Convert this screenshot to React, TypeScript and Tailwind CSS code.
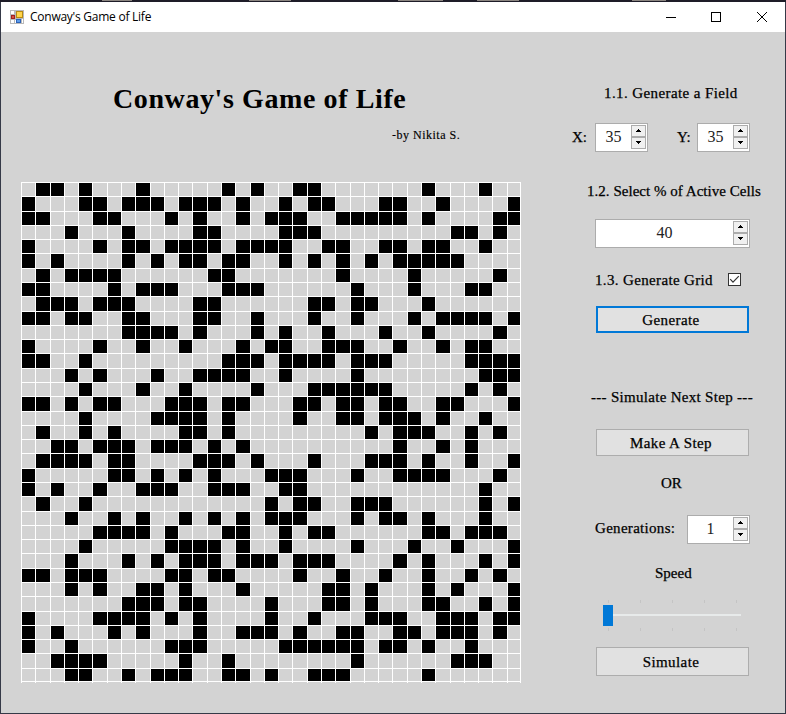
import type { ReactNode } from "react";

const SIZE = 35;
const FIELD = 500;

const ACTIVE: number[][] = [
  [1, 2, 4, 8, 14, 16, 19, 20, 28, 32],
  [0, 4, 5, 7, 8, 9, 11, 12, 13, 15, 18, 20, 21, 25, 26, 29, 34],
  [0, 1, 5, 6, 10, 12, 15, 17, 18, 19, 22, 23, 24, 25, 26, 28, 33, 34],
  [3, 7, 12, 13, 18, 19, 20, 30, 31, 33],
  [0, 5, 7, 8, 10, 11, 12, 13, 15, 16, 17, 18, 21, 22, 25, 26, 28, 29, 32],
  [0, 2, 7, 9, 11, 12, 14, 15, 18, 20, 22, 24, 26, 27, 28, 29, 30],
  [1, 3, 4, 5, 6, 13, 14, 22, 27, 33],
  [0, 1, 6, 8, 9, 10, 14, 15, 16, 23, 27, 31, 32],
  [1, 2, 3, 5, 6, 7, 12, 13, 20, 21, 23, 24, 28],
  [0, 1, 3, 4, 7, 8, 12, 13, 16, 20, 23, 27, 29, 30, 31, 32, 34],
  [7, 8, 9, 10, 12, 16, 18, 21, 25, 28, 33],
  [0, 5, 8, 11, 15, 17, 18, 21, 22, 23, 26, 29, 31, 32],
  [0, 1, 4, 14, 15, 16, 18, 19, 20, 21, 23, 24, 25, 31, 32, 33, 34],
  [3, 5, 9, 12, 13, 14, 15, 18, 23, 32, 33, 34],
  [4, 8, 11, 16, 20, 21, 22, 23, 24, 25, 31, 33],
  [0, 1, 3, 5, 6, 10, 11, 12, 14, 15, 19, 20, 22, 23, 25, 26, 29, 30, 34],
  [4, 9, 10, 11, 12, 14, 19, 22, 23, 25, 26, 27, 29, 32],
  [1, 4, 6, 11, 12, 14, 24, 26, 27, 28, 31, 33],
  [2, 3, 5, 6, 7, 9, 10, 11, 13, 15, 26, 29, 31],
  [1, 2, 3, 4, 6, 7, 12, 13, 14, 16, 20, 24, 25, 26, 28, 31, 34],
  [0, 6, 7, 9, 11, 13, 17, 18, 19, 23, 26, 27, 28, 29, 33],
  [0, 2, 5, 8, 9, 10, 13, 14, 15, 18, 19, 32],
  [1, 4, 17, 19, 20, 23, 24, 25, 32, 34],
  [3, 6, 8, 11, 13, 15, 17, 18, 19, 23, 25, 26, 28, 32],
  [5, 6, 7, 8, 10, 14, 15, 18, 20, 21, 28, 29, 31, 32, 33],
  [4, 10, 11, 12, 13, 15, 18, 23, 27, 30, 34],
  [3, 7, 9, 11, 12, 13, 15, 16, 17, 19, 20, 21, 26, 28, 32, 34],
  [0, 1, 3, 4, 5, 10, 11, 13, 14, 19, 22, 25, 28, 31, 33],
  [3, 5, 8, 9, 11, 15, 21, 22, 24, 28, 30, 34],
  [7, 8, 9, 11, 12, 17, 21, 22, 24, 28, 29, 32, 34],
  [0, 5, 6, 7, 8, 10, 12, 17, 20, 24, 25, 26, 29, 30, 31, 33, 34],
  [0, 2, 6, 8, 12, 15, 16, 17, 19, 22, 23, 26, 27, 29, 30, 31, 33],
  [0, 3, 10, 11, 12, 18, 19, 20, 21, 22, 23, 25, 26, 28, 31],
  [2, 3, 4, 5, 11, 14, 23, 30, 31, 32],
  [3, 4, 7, 9, 10, 11, 14, 15, 17, 20, 21, 22, 28],
];

const edge = (i: number) => Math.min(Math.round((i * FIELD) / SIZE), FIELD - 1);
const TRACKS = Array.from({ length: SIZE }, (_, i) => `${edge(i + 1) - edge(i)}px`).join(" ");

function Field() {
  return (
    <div className="ml-5 w-[500px]">
      <div
        className="grid border-r border-b border-white"
        style={{ gridTemplateColumns: TRACKS, gridTemplateRows: TRACKS }}
      >
        {ACTIVE.map((row, y) =>
          Array.from({ length: SIZE }, (_, x) => (
            <div
              key={`${x}-${y}`}
              className={row.includes(x) ? "border-t border-l border-white bg-black" : "border-t border-l border-white"}
            />
          )),
        )}
      </div>
      <div className="grid h-px border-r border-white" style={{ gridTemplateColumns: TRACKS }}>
        {Array.from({ length: SIZE }, (_, x) => (
          <div key={x} className="border-l border-white" />
        ))}
      </div>
    </div>
  );
}

function Arrow({ down = false }: { down?: boolean }) {
  return (
    <div className="flex h-3 w-[15px] justify-center border border-[#acacac] bg-[#f0f0f0] pt-[3px]">
      <svg width="5" height="3" viewBox="0 0 5 3" shapeRendering="crispEdges" fill="#000">
        {down ? <path d="M0 0h5v1H0zM1 1h3v1H1zM2 2h1v1H2z" /> : <path d="M2 0h1v1H2zM1 1h3v1H1zM0 2h5v1H0z" />}
      </svg>
    </div>
  );
}

function Spinner({ value, width }: { value: string; width: string }) {
  return (
    <div className={`flex h-[29px] border border-[#acacac] bg-white ${width}`}>
      <div className="flex-1 text-center text-[16px] leading-[26px] text-[#222]">{value}</div>
      <div className="flex w-4 flex-col pt-px">
        <Arrow />
        <Arrow down />
      </div>
    </div>
  );
}

function Button({ children, look }: { children: ReactNode; look: string }) {
  return (
    <button
      className={`ml-[31px] flex w-[153px] items-center justify-center bg-[#e1e1e1] pt-0.5 pr-[3px] text-[15px] tracking-[0.4px] [-webkit-text-stroke:0.25px_#000] ${look}`}
    >
      {children}
    </button>
  );
}

function Label({ children, className }: { children: ReactNode; className: string }) {
  return (
    <div className={`h-5 text-[15px] leading-5 whitespace-nowrap [-webkit-text-stroke:0.25px_#000] ${className}`}>
      {children}
    </div>
  );
}

function Ticks() {
  return (
    <div className="ml-[43px] flex h-[3px] w-[129px] justify-between">
      {[0, 1, 2, 3, 4].map((t) => (
        <div key={t} className="w-px bg-[#c4c4c4]" />
      ))}
    </div>
  );
}

function TitleBar() {
  return (
    <div className="flex h-[30px] items-center bg-white">
      <svg className="ml-[9px]" width="14" height="14" viewBox="0 0 14 14" shapeRendering="crispEdges">
        <path fill="#b9b9b9" d="M0 0h14v14H0z" />
        <path fill="#fff" d="M1 1h3v3H1zM1 10h3v3H1zM5 10h1v3H5zM12 9h1v4h-1z" />
        <path fill="#b88a12" d="M6 1h7v7H6z" />
        <path fill="#ffd54a" d="M7 2h5v5H7z" />
        <path fill="#a02020" d="M1 5h4v4H1z" />
        <path fill="#d85040" d="M2 6h2v2H2z" />
        <path fill="#2c62b8" d="M6 9h5v4H6z" />
        <path fill="#5b9bea" d="M7 10h3v2H7z" />
      </svg>
      <span className="ml-[6px] flex-1 font-['Open_Sans','Noto_Sans',sans-serif] text-[12px] leading-[30px] tracking-[-0.25px] whitespace-nowrap">
        Conway's Game of Life
      </span>
      <svg width="119" height="12" viewBox="0 0 119 12" fill="none" stroke="#000">
        <path shapeRendering="crispEdges" d="M0 6.5h10M45.5 1.5h9v9h-9z" />
        <path d="M91 1l10 10M101 1L91 11" />
      </svg>
    </div>
  );
}

export default function App() {
  return (
    <div className="flex h-[714px] w-[786px] flex-col overflow-hidden bg-[#353947] font-['Liberation_Serif',serif] text-black">
      <div className="flex h-0.5 items-start bg-[#1e1c28]">
        <div className="ml-[102px] h-px w-[30px] bg-[#8b8580]" />
        <div className="ml-[117px] h-px w-[42px] bg-[#8b8580]" />
        <div className="ml-[107px] h-px w-[45px] bg-[#8b8580]" />
        <div className="ml-[34px] h-px w-[42px] bg-[#8b8580]" />
        <div className="ml-[113px] h-px w-[34px] bg-[#8b8580]" />
      </div>
      <div className="mx-px mb-px flex flex-1 flex-col bg-[#d3d3d3]">
        <TitleBar />
        <div className="flex flex-1">
          <div className="flex w-[564px] flex-col">
            <h1 className="mt-[48px] ml-[112px] h-[38px] text-[28px] leading-[38px] font-bold tracking-[0.6px] whitespace-nowrap">
              Conway's Game of Life
            </h1>
            <div className="mt-[9px] mb-[39px] ml-[391px] h-4 text-[12px] leading-4 tracking-[0.5px] whitespace-nowrap [-webkit-text-stroke:0.15px_#000]">
              -by Nikita S.
            </div>
            <Field />
          </div>
          <div className="flex flex-1 flex-col">
            <Label className="mt-[51px] ml-[39px] tracking-[0.4px]">1.1. Generate a Field</Label>
            <div className="mt-[20px] flex h-[29px]">
              <Label className="mt-[4px] ml-[7px] w-[23px]">X:</Label>
              <Spinner value="35" width="w-[53px]" />
              <Label className="mt-[4px] ml-[29px] w-[20px]">Y:</Label>
              <Spinner value="35" width="w-[53px]" />
            </div>
            <Label className="mt-[29px] ml-[22px] tracking-[0.03px]">1.2. Select % of Active Cells</Label>
            <div className="mt-[18px] ml-[30px] flex">
              <Spinner value="40" width="w-[155px]" />
            </div>
            <div className="mt-[22px] ml-[30px] flex h-5">
              <Label className="w-[133px] tracking-[0.35px]">1.3. Generate Grid</Label>
              <div className="mt-[3px] h-[13px] w-[13px] border border-[#333] bg-white">
                <svg width="11" height="11" viewBox="0 0 11 11" fill="none" stroke="#333" strokeWidth="1.2">
                  <path d="M1.2 5.2L4 8.2L9.8 2.2" />
                </svg>
              </div>
            </div>
            <Button look="mt-[16px] h-[27px] border-2 border-[#0078d7]">Generate</Button>
            <Label className="mt-[54px] ml-[26px] tracking-[0.3px]">--- Simulate Next Step ---</Label>
            <Button look="mt-[22px] h-[27px] border border-[#adadad]">Make A Step</Button>
            <Label className="mt-[17px] ml-[96px]">OR</Label>
            <div className="mt-[22px] ml-[30px] flex h-[29px]">
              <Label className="mt-[3px] w-[92px] tracking-[0.3px]">Generations:</Label>
              <Spinner value="1" width="w-[63px]" />
            </div>
            <Label className="mt-[19px] ml-[90px]">Speed</Label>
            <div className="mt-[17px]">
              <Ticks />
              <div className="mt-px ml-[38px] flex h-[21px] items-center">
                <div className="mt-px h-[21px] w-2.5 bg-[#0078d7]" />
                <div className="mt-px h-0.5 w-32 bg-[#e7eaea]" />
              </div>
              <div className="h-[3px]" />
              <Ticks />
            </div>
            <Button look="mt-[16px] h-[29px] border border-[#adadad]">Simulate</Button>
          </div>
        </div>
      </div>
    </div>
  );
}
